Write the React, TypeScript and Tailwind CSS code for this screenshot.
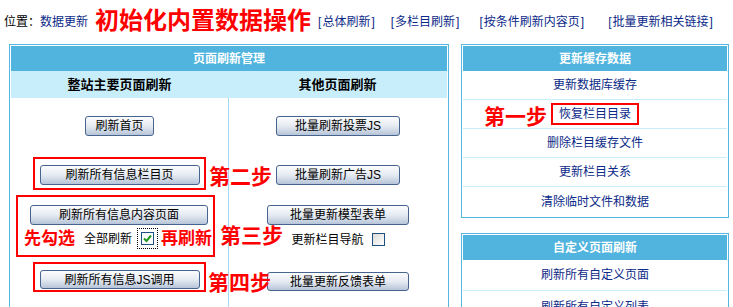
import type { ReactNode } from 'react'

// 按钮：浅色渐变 + 深蓝边框
function Btn({ className = '', children }: { className?: string; children: ReactNode }) {
    return (
        <button
            className={`flex items-center justify-center rounded-[3px] border border-[#46648e] bg-linear-to-b from-[#fbfcfd] via-[#e6ebf2] to-[#b7c5d9] text-[12px] leading-none text-black ${className}`}
        >
            {children}
        </button>
    )
}

function Mark({ className = '', children }: { className?: string; children: ReactNode }) {
    return (
        <span className={`absolute whitespace-nowrap text-[21px] font-bold leading-none text-[#ff0000] ${className}`}>
            {children}
        </span>
    )
}

const cacheRows = ['更新数据库缓存', '恢复栏目目录', '删除栏目缓存文件', '更新栏目关系', '清除临时文件和数据']
const customRows = ['刷新所有自定义页面', '刷新所有自定义列表']

export default function App() {
    return (
        <div className="h-[307px] w-[733px] overflow-hidden bg-white text-[12px] text-black font-['Liberation_Sans','Noto_Sans_CJK_SC',sans-serif]">
            {/* 顶部位置栏 */}
            <div className="flex h-[44px] items-center pl-[4px] whitespace-nowrap">
                <span>位置：</span>
                <a className="text-[#0c2a88]">数据更新</a>
                <span className="ml-[7px] -mt-[3px] text-[24px] font-bold leading-none text-[#ff0000]">初始化内置数据操作</span>
                <a className="ml-[7px] text-[#0c2a88]">[<span className="px-[1px]">总体刷新</span>]</a>
                <a className="ml-[16px] text-[#0c2a88]">[<span className="px-[1px]">多栏目刷新</span>]</a>
                <a className="ml-[20px] text-[#0c2a88]">[<span className="px-[1px]">按条件刷新内容页</span>]</a>
                <a className="ml-[24px] text-[#0c2a88]">[<span className="px-[1px]">批量更新相关链接</span>]</a>
            </div>

            <div className="flex gap-[12px] pl-[9px]">
                {/* 页面刷新管理 */}
                <div className="h-[300px] w-[440px] shrink-0 border border-[#56b8e2] p-px">
                    <div className="flex h-[25px] items-center justify-center bg-[#50b4de] font-bold text-white">页面刷新管理</div>
                    <div className="flex h-[27px] bg-[#c8eefc] text-[13px] font-bold">
                        <div className="flex w-[217px] items-center justify-center">整站主要页面刷新</div>
                        <div className="flex flex-1 items-center justify-center">其他页面刷新</div>
                    </div>
                    <div className="flex h-full">
                        <div className="flex w-[217px] flex-col items-center">
                            <Btn className="mt-[18px] h-[20px] w-[69px]">刷新首页</Btn>

                            <div className="relative mt-[21px] flex h-[33px] w-[173px] justify-center border-2 border-[#ff0000] pt-[6px]">
                                <Btn className="h-[20px] w-[160px]">刷新所有信息栏目页</Btn>
                                <Mark className="left-[calc(100%+5px)] top-[7px]">第二步</Mark>
                            </div>

                            <div className="relative mt-[5px] ml-[5px] flex h-[62px] w-[199px] flex-col self-start border-2 border-[#ff0000] pt-[8px] pl-[12px]">
                                <Btn className="h-[20px] w-[178px]">刷新所有信息内容页面</Btn>
                                <div className="mt-[3px] -ml-[6px] flex h-[21px] items-center whitespace-nowrap">
                                    <span className="text-[17px] font-bold leading-none text-[#ff0000]">先勾选</span>
                                    <span className="ml-[9px]">全部刷新</span>
                                    <span className="ml-[5px] flex h-[21px] w-[21px] items-center justify-center border border-dotted border-black">
                                        <span className="flex h-[13px] w-[13px] items-center justify-center border border-[#1c5180] bg-white">
                                            <svg width="11" height="11" viewBox="0 0 11 11">
                                                <path d="M2 5.5 L4.5 8 L9 2.5" fill="none" stroke="#1f9a1f" strokeWidth="2" />
                                            </svg>
                                        </span>
                                    </span>
                                    <span className="ml-[3px] text-[17px] font-bold leading-none text-[#ff0000]">再刷新</span>
                                </div>
                                <Mark className="left-[calc(100%+7px)] top-[28px]">第三步</Mark>
                            </div>

                            <div className="relative mt-[5px] flex h-[30px] w-[173px] justify-center border-2 border-[#ff0000] pt-[6px]">
                                <Btn className="h-[19px] w-[160px]">刷新所有信息JS调用</Btn>
                                <Mark className="left-[calc(100%+4px)] top-[8px]">第四步</Mark>
                            </div>
                        </div>

                        <div className="w-px bg-[#a3daf2]" />

                        <div className="flex flex-1 flex-col items-center">
                            <Btn className="mt-[18px] h-[20px] w-[124px]">批量刷新投票JS</Btn>
                            <Btn className="mt-[29px] h-[20px] w-[124px]">批量刷新广告JS</Btn>
                            <Btn className="mt-[20px] h-[20px] w-[142px]">批量更新模型表单</Btn>
                            <div className="mt-[8px] flex h-[13px] items-center gap-[8px] whitespace-nowrap">
                                <span>更新栏目导航</span>
                                <span className="h-[13px] w-[13px] border border-[#1c5180] bg-linear-to-br from-[#dcdcd6] to-white" />
                            </div>
                            <Btn className="mt-[26px] h-[19px] w-[142px]">批量更新反馈表单</Btn>
                        </div>
                    </div>
                </div>

                {/* 右侧列 */}
                <div className="flex w-[268px] shrink-0 flex-col gap-[15px]">
                    <div className="border border-[#56b8e2] p-px">
                        <div className="flex h-[25px] items-center justify-center bg-[#50b4de] font-bold text-white">更新缓存数据</div>
                        <div className="flex flex-col divide-y divide-[#c8eefc]">
                            {cacheRows.map((t, i) => (
                                <div key={t} className="flex h-[29px] items-center justify-center text-[#0c2a88]">
                                    {i === 1 ? (
                                        <span className="relative border-2 border-[#ff0000] px-[6px] py-[3px] leading-none">
                                            {t}
                                            <Mark className="right-[calc(100%+6px)] top-[1px]">第一步</Mark>
                                        </span>
                                    ) : (
                                        t
                                    )}
                                </div>
                            ))}
                        </div>
                    </div>

                    <div className="border border-[#56b8e2] p-px">
                        <div className="flex h-[25px] items-center justify-center bg-[#50b4de] font-bold text-white">自定义页面刷新</div>
                        <div className="flex flex-col divide-y divide-[#c8eefc]">
                            {customRows.map((t) => (
                                <div key={t} className="flex h-[31px] items-center justify-center text-[#0c2a88]">{t}</div>
                            ))}
                        </div>
                    </div>
                </div>
            </div>
        </div>
    )
}
